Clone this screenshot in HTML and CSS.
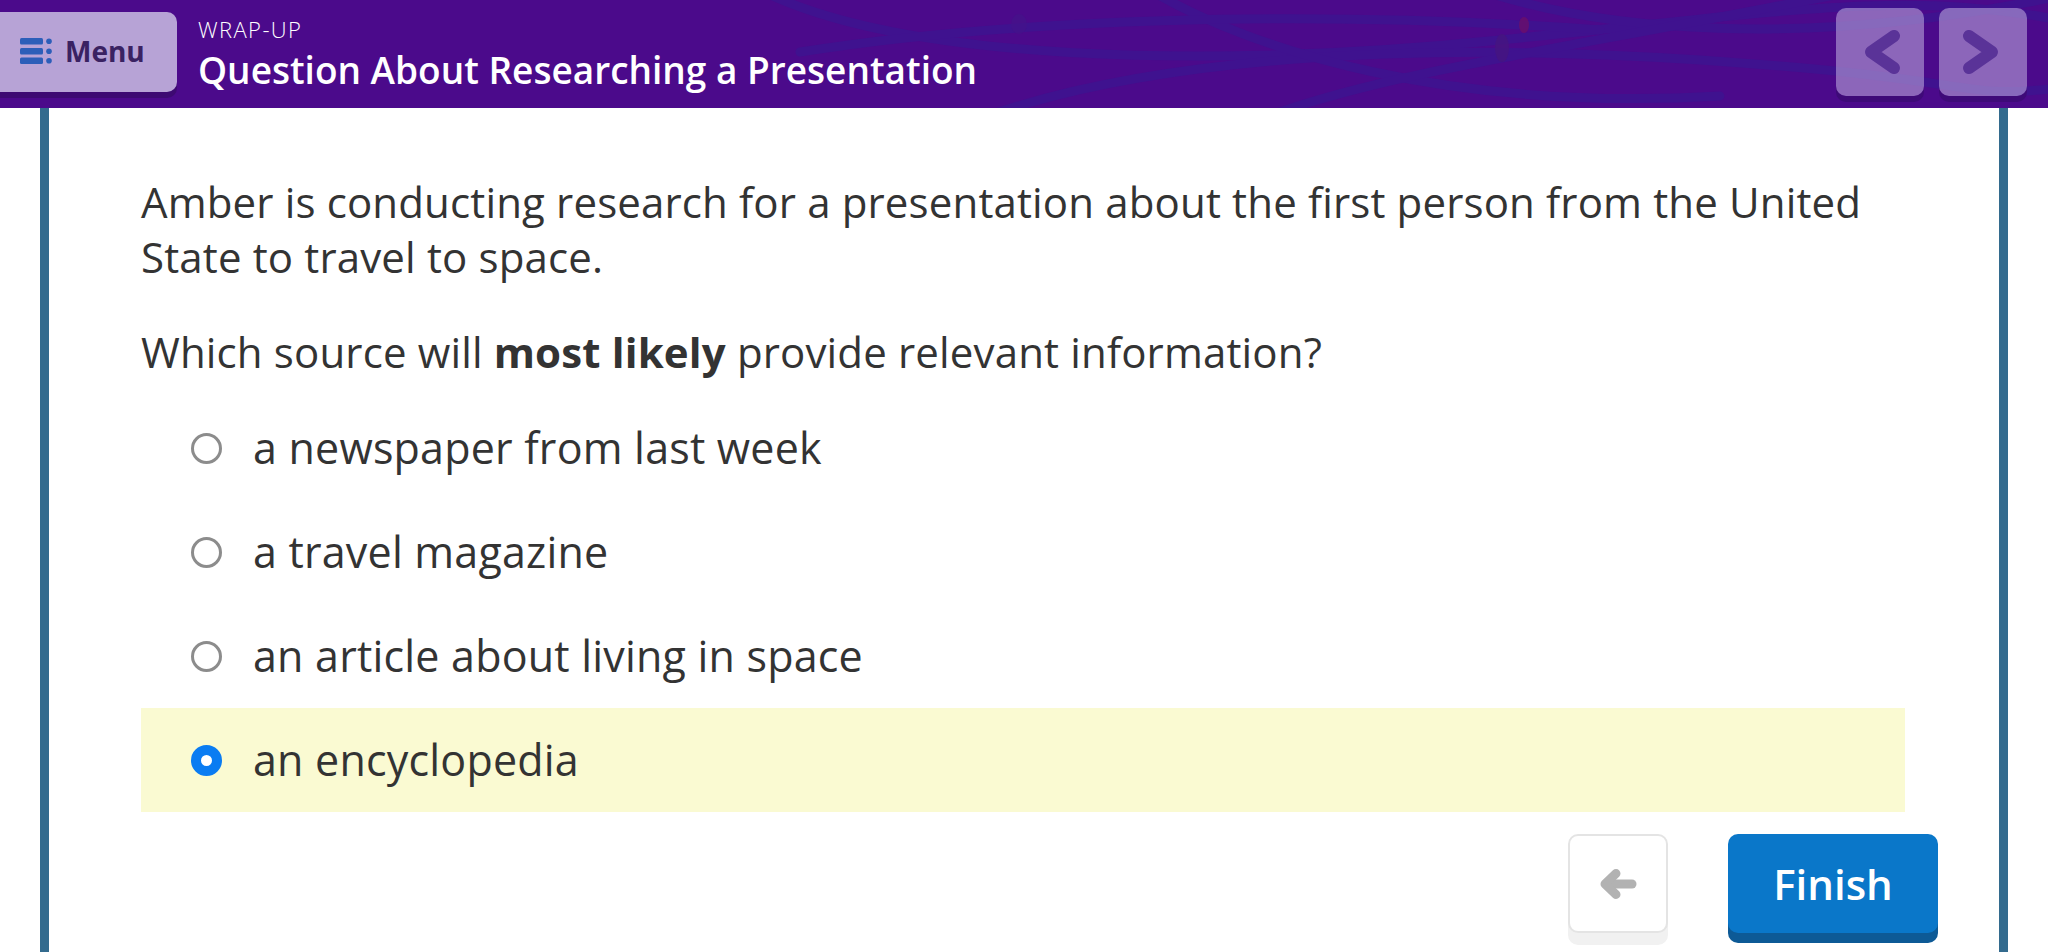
FILE: index.html
```html
<!DOCTYPE html>
<html lang="en">
<head>
<meta charset="utf-8">
<title>Question About Researching a Presentation</title>
<link rel="stylesheet" href="styles.css">
</head>
<body>
<header class="topbar">
  <svg class="topbar-art" viewBox="0 0 2048 108" preserveAspectRatio="none" aria-hidden="true">
    <g fill="none" stroke="#3b1692" stroke-width="9" stroke-linecap="round" opacity="0.7">
      <path d="M760 -10 C900 60 1200 70 1500 40 S1900 -10 2060 20"/>
      <path d="M990 115 C1150 60 1400 40 1700 60 S1950 100 2060 88"/>
      <path d="M1150 -10 C1250 50 1450 112 1720 96"/>
      <path d="M1480 -10 C1600 30 1800 50 2060 -4"/>
      <path d="M800 52 C1000 20 1300 8 1600 30"/>
      <path d="M1280 112 C1400 70 1560 50 1860 -10"/>
    </g>
    <ellipse cx="1502" cy="48" rx="7" ry="14" fill="#46157f" opacity="0.8"/>
    <ellipse cx="1524" cy="25" rx="5" ry="8" fill="#6a0f6a" opacity="0.8"/>
    <ellipse cx="1019" cy="24" rx="8" ry="10" fill="#44128a" opacity="0.7"/>
  </svg>
  <button class="menu-btn" type="button">
    <svg class="menu-icon" width="32" height="27" viewBox="0 0 32 27" aria-hidden="true">
      <rect x="0" y="0" width="23" height="6.5" rx="1.5"/>
      <rect x="0" y="10" width="23" height="6.5" rx="1.5"/>
      <rect x="0" y="19.5" width="23" height="6.5" rx="1.5"/>
      <circle cx="29" cy="3.2" r="2.8"/>
      <circle cx="29" cy="13.2" r="2.8"/>
      <circle cx="29" cy="22.8" r="2.8"/>
    </svg>
    <span>Menu</span>
  </button>
  <div class="titles">
    <div class="kicker">WRAP-UP</div>
    <h1 class="title">Question About Researching a Presentation</h1>
  </div>
  <nav class="pager">
    <button class="pager-btn" type="button" aria-label="Previous">
      <svg width="88" height="88" viewBox="0 0 88 88" aria-hidden="true"><polyline points="58,28 35,44 58,60" fill="none" stroke="#5a3398" stroke-width="12" stroke-linecap="round" stroke-linejoin="round"/></svg>
    </button>
    <button class="pager-btn" type="button" aria-label="Next">
      <svg width="88" height="88" viewBox="0 0 88 88" aria-hidden="true"><polyline points="30,28 53,44 30,60" fill="none" stroke="#5a3398" stroke-width="12" stroke-linecap="round" stroke-linejoin="round"/></svg>
    </button>
  </nav>
</header>

<main class="card">
  <section class="question">
    <p class="stem">Amber is conducting research for a presentation about the first person from the United State to travel to space.</p>
    <p class="stem stem-ask">Which source will <strong>most likely</strong> provide relevant information?</p>
    <ul class="options">
      <li class="option"><span class="radio"></span><span class="label">a newspaper from last week</span></li>
      <li class="option"><span class="radio"></span><span class="label">a travel magazine</span></li>
      <li class="option"><span class="radio"></span><span class="label">an article about living in space</span></li>
      <li class="option selected"><span class="radio"></span><span class="label">an encyclopedia</span></li>
    </ul>
  </section>
  <footer class="actions">
    <button class="back-btn" type="button" aria-label="Back">
      <svg width="38" height="32" viewBox="0 0 38 32" aria-hidden="true">
        <g fill="none" stroke="#b2b2b2" stroke-width="9" stroke-linecap="round" stroke-linejoin="round">
          <line x1="33" y1="16" x2="8" y2="16"/>
          <polyline points="17,5.5 6,16 17,26.5"/>
        </g>
      </svg>
    </button>
    <button class="finish-btn" type="button">Finish</button>
  </footer>
</main>
</body>
</html>
```

FILE: styles.css
```css
* { box-sizing: border-box; }

html, body {
  margin: 0;
  padding: 0;
  background: #ffffff;
}

body {
  font-family: "Open Sans", "DejaVu Sans", sans-serif;
  color: #333333;
  overflow: hidden;
}

button {
  font-family: inherit;
  cursor: pointer;
}

/* ---------- top bar ---------- */
.topbar {
  position: relative;
  height: 108px;
  background: #4b0a8b;
  display: flex;
  align-items: flex-start;
  overflow: hidden;
}

.topbar-art {
  position: absolute;
  left: 0;
  top: 0;
  width: 100%;
  height: 100%;
  z-index: 0;
}

.menu-btn,
.titles,
.pager {
  position: relative;
  z-index: 1;
}

.menu-btn {
  margin: 12px 0 0 -10px;
  width: 187px;
  height: 80px;
  padding: 0 0 2px 30px;
  border: 0;
  border-radius: 10px;
  background: #b7a3d6;
  box-shadow: 0 6px 0 #3d0a72;
  display: flex;
  align-items: center;
  gap: 13px;
  font-size: 28px;
  font-weight: 700;
  color: #3a2262;
}

.menu-icon {
  fill: #2c5eb9;
  flex: none;
}

.titles {
  margin-left: 21px;
  padding-top: 14px;
  color: #ffffff;
}

.kicker {
  font-size: 22px;
  line-height: 30px;
  font-weight: 300;
  letter-spacing: 1.4px;
}

.title {
  margin: 0;
  font-size: 37px;
  line-height: 51px;
  font-weight: 600;
}

.pager {
  margin: 8px 21px 0 auto;
  display: flex;
  gap: 15px;
}

.pager-btn {
  width: 88px;
  height: 88px;
  padding: 0;
  border: 0;
  border-radius: 10px;
  background: rgba(183, 163, 218, 0.6);
  box-shadow: 0 6px 0 #3e0a78;
  display: block;
}

.pager-btn svg { display: block; }

/* ---------- card ---------- */
.card {
  margin: 0 40px;
  min-height: calc(100vh - 108px);
  border-left: 9px solid #336b8e;
  border-right: 9px solid #336b8e;
  background: #ffffff;
}

.question {
  padding: 66px 94px 0 92px;
}

.stem {
  margin: 0 0 40px;
  font-size: 42px;
  line-height: 55px;
  font-weight: 400;
  letter-spacing: 0.15px;
}

.stem strong { font-weight: 700; }

.stem-ask { margin-bottom: 17px; }

.options {
  list-style: none;
  margin: 0;
  padding: 0;
}

.option {
  height: 104px;
  padding-left: 50px;
  display: flex;
  align-items: center;
}

.option.selected { background: #fafad2; }

.radio {
  flex: none;
  width: 31px;
  height: 31px;
  border-radius: 50%;
  border: 3px solid #8c8c8c;
  background: #ffffff;
}

.option.selected .radio {
  border: 10px solid #0a7cf2;
}

.label {
  margin-left: 31px;
  font-size: 43px;
  line-height: 104px;
  letter-spacing: 0.2px;
}

/* ---------- footer actions ---------- */
.actions {
  display: flex;
  justify-content: flex-end;
  gap: 60px;
  padding: 22px 61px 0 0;
}

.back-btn {
  width: 100px;
  height: 99px;
  padding: 0;
  border: 2px solid #e4e4e4;
  border-radius: 10px;
  background: #ffffff;
  box-shadow: 0 12px 0 #f1f1f1;
  display: flex;
  align-items: center;
  justify-content: center;
}

.finish-btn {
  width: 210px;
  height: 99px;
  padding: 0;
  border: 0;
  border-radius: 10px;
  background: #0a77c9;
  box-shadow: 0 10px 0 #0d5a96;
  color: #ffffff;
  font-size: 42px;
  font-weight: 600;
}
```
